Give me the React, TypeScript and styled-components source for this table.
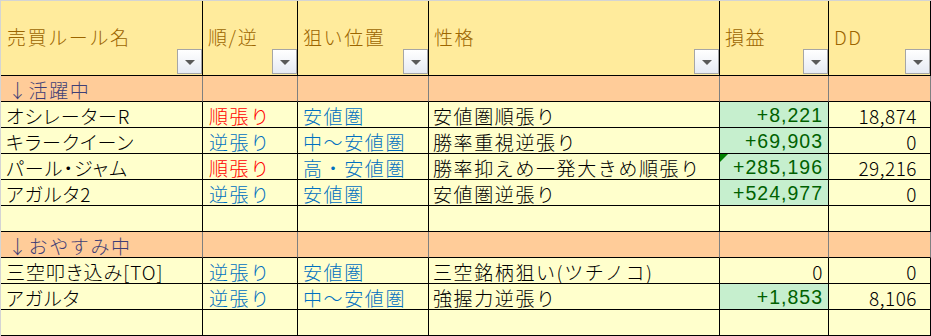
import React from "react";
import styled, { createGlobalStyle } from "styled-components";

const GlobalStyle = createGlobalStyle`
  html, body {
    margin: 0;
    padding: 0;
    background: #ffffff;
  }
  body {
    font-family: "Noto Sans CJK JP", "Noto Sans", sans-serif;
  }
`;

const COLS = [202, 95, 131, 291, 109, 102];

const Sheet = styled.div`
  display: grid;
  grid-template-columns: ${COLS.map((w) => `${w}px`).join(" ")};
  grid-auto-rows: 26px;
  grid-template-rows: 75px;
  width: 931px;
  box-sizing: border-box;
  border-top: 1px solid #d4d4d4;
  border-left: 1px solid #d4d4d4;
`;

type Kind = "header" | "section" | "body";
type Tone = "plain" | "red" | "blue" | "good";

const fills: Record<Kind, string> = {
  header: "#ffeb9c",
  section: "#ffcc99",
  body: "#ffffcc",
};

const inks: Record<Tone, string> = {
  plain: "#000000",
  red: "#ff0000",
  blue: "#0070c0",
  good: "#006100",
};

const Cell = styled.div<{
  $kind: Kind;
  $tone?: Tone;
  $right?: boolean;
  $pad?: number;
  $kana?: boolean;
}>`
  position: relative;
  box-sizing: border-box;
  display: flex;
  align-items: center;
  justify-content: ${(p) => (p.$right ? "flex-end" : "flex-start")};
  padding: ${(p) => (p.$kind === "header" ? "0" : "2px")} ${(p) => (p.$right ? p.$pad ?? 6 : 0)}px
    ${(p) => (p.$kind === "header" ? "4px" : "0")} ${(p) => (p.$right ? 0 : p.$pad ?? 5)}px;
  border-bottom: 1px solid #000000;
  border-right: 1px solid ${(p) => (p.$kind === "section" ? "#7f7f7f" : "#000000")};
  background: ${(p) => (p.$tone === "good" ? "#c6efce" : fills[p.$kind])};
  color: ${(p) =>
    p.$kind === "header" ? "#9c6500" : p.$kind === "section" ? "#3f3f76" : inks[p.$tone ?? "plain"]};
  font-size: 19px;
  font-weight: 300;
  letter-spacing: ${(p) => (p.$kana ? "1px" : "1.6px")};
  font-feature-settings: ${(p) => (p.$kana ? `"palt"` : "normal")};
  white-space: nowrap;
  overflow: hidden;
  line-height: 1;
`;

const Figure = styled.span<{ $good?: boolean }>`
  font-family: ${(p) => (p.$good ? `"Liberation Sans", Arial, sans-serif` : `"Noto Sans CJK JP", sans-serif`)};
  font-size: ${(p) => (p.$good ? "19.5px" : "19px")};
  font-weight: ${(p) => (p.$good ? 400 : 300)};
  letter-spacing: ${(p) => (p.$good ? "1px" : "0.5px")};
`;

const FilterButton = styled.div`
  position: absolute;
  right: 0;
  bottom: 1px;
  width: 25px;
  height: 25px;
  box-sizing: border-box;
  border: 1px solid #a6a6a6;
  background: linear-gradient(#ffffff, #e6eaf3);
  display: flex;
  align-items: center;
  justify-content: center;
  &::after {
    content: "";
    width: 0;
    height: 0;
    margin-top: 2px;
    border-left: 5px solid transparent;
    border-right: 5px solid transparent;
    border-top: 5px solid #595959;
  }
`;

const Marker = styled.span`
  position: absolute;
  left: 0;
  top: 0;
  width: 0;
  height: 0;
  border-top: 8px solid #008000;
  border-right: 8px solid transparent;
`;

type Row = {
  name: string;
  side: "順張り" | "逆張り";
  zone: string;
  style: string;
  pnl: string;
  good: boolean;
  mark?: boolean;
  dd: string;
};

const active: Row[] = [
  { name: "オシレーターR", side: "順張り", zone: "安値圏", style: "安値圏順張り", pnl: "+8,221", good: true, dd: "18,874" },
  { name: "キラークイーン", side: "逆張り", zone: "中～安値圏", style: "勝率重視逆張り", pnl: "+69,903", good: true, dd: "0" },
  { name: "パール・ジャム", side: "順張り", zone: "高・安値圏", style: "勝率抑えめ一発大きめ順張り", pnl: "+285,196", good: true, mark: true, dd: "29,216" },
  { name: "アガルタ2", side: "逆張り", zone: "安値圏", style: "安値圏逆張り", pnl: "+524,977", good: true, dd: "0" },
];

const resting: Row[] = [
  { name: "三空叩き込み[TO]", side: "逆張り", zone: "安値圏", style: "三空銘柄狙い(ツチノコ)", pnl: "0", good: false, dd: "0" },
  { name: "アガルタ", side: "逆張り", zone: "中～安値圏", style: "強握力逆張り", pnl: "+1,853", good: true, dd: "8,106" },
];

const headings = ["売買ルール名", "順/逆", "狙い位置", "性格", "損益", "DD"];

const SectionRow = ({ label }: { label: string }) => (
  <>
    <Cell $kind="section" $pad={7}>{label}</Cell>
    {COLS.slice(1).map((_, i) => (
      <Cell key={i} $kind="section" />
    ))}
  </>
);

const BlankRow = () => (
  <>
    {COLS.map((_, i) => (
      <Cell key={i} $kind="body" />
    ))}
  </>
);

const RuleRow = ({ row }: { row: Row }) => (
  <>
    <Cell $kind="body" $kana>{row.name}</Cell>
    <Cell $kind="body" $tone={row.side === "順張り" ? "red" : "blue"} $pad={6}>
      {row.side}
    </Cell>
    <Cell $kind="body" $tone="blue" $pad={5}>
      {row.zone}
    </Cell>
    <Cell $kind="body" $pad={4}>{row.style}</Cell>
    <Cell $kind="body" $tone={row.good ? "good" : "plain"} $right $pad={5}>
      {row.mark && <Marker />}
      <Figure $good={row.good}>{row.pnl}</Figure>
    </Cell>
    <Cell $kind="body" $right $pad={13}>
      <Figure>{row.dd}</Figure>
    </Cell>
  </>
);

export default function App() {
  return (
    <>
      <GlobalStyle />
      <Sheet>
        {headings.map((h, i) => (
          <Cell key={h} $kind="header" $pad={i === 0 ? 6 : 5}>
            {h}
            <FilterButton />
          </Cell>
        ))}
        <SectionRow label="↓活躍中" />
        {active.map((r) => (
          <RuleRow key={r.name} row={r} />
        ))}
        <BlankRow />
        <SectionRow label="↓おやすみ中" />
        {resting.map((r) => (
          <RuleRow key={r.name} row={r} />
        ))}
        <BlankRow />
      </Sheet>
    </>
  );
}
